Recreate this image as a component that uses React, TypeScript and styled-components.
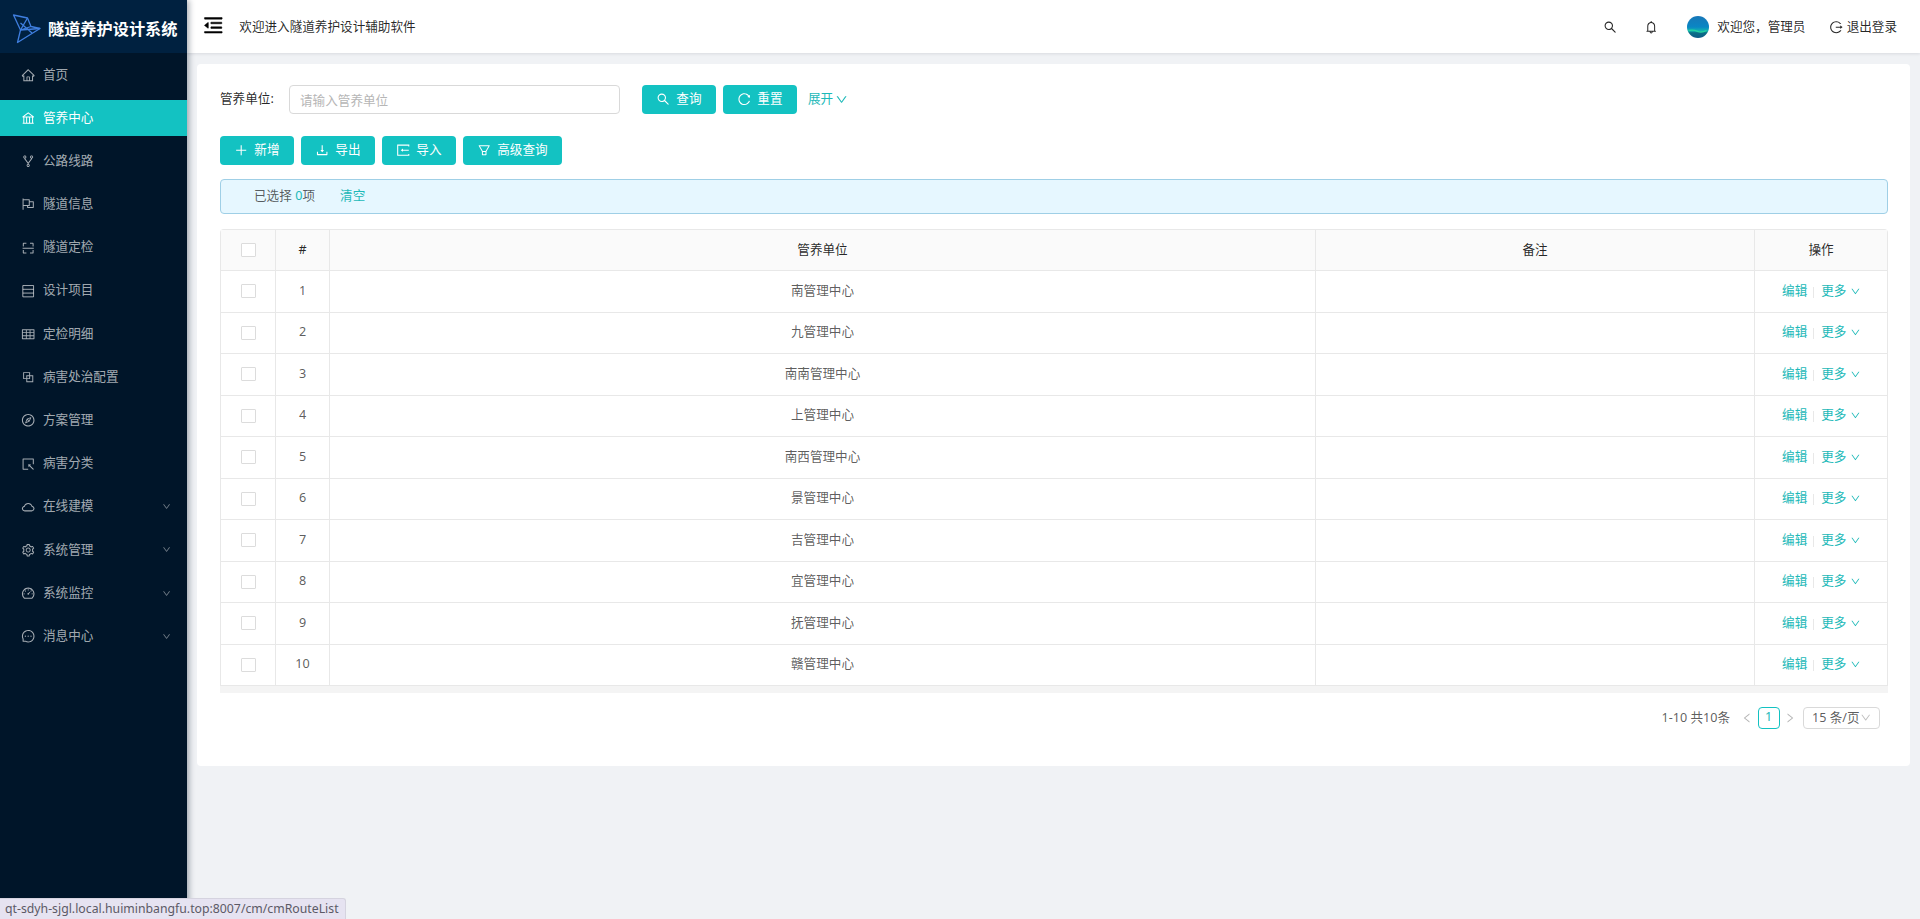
import React from "react";
import styled, { createGlobalStyle } from "styled-components";
import {
  AiOutlineHome, AiOutlineFork, AiOutlineFlag, AiOutlineScan,
  AiOutlineTable, AiOutlineBlock, AiOutlineCompass, AiOutlineSelect, AiOutlineCloud, AiOutlineSetting,
  AiOutlineDashboard, AiOutlineMessage, AiOutlineMenuFold, AiOutlineSearch, AiOutlineBell,
  AiOutlineLogout, AiOutlineReload, AiOutlinePlus, AiOutlineDownload,
  AiOutlineFilter, AiOutlineDown, AiOutlineLeft, AiOutlineRight,
} from "react-icons/ai";

const TEAL = "#13c2c2";
const LINK = "#1cb9b8";
const LINE = "#e8e8e8";

const GlobalStyle = createGlobalStyle`
  * { box-sizing: border-box; }
  body {
    margin: 0;
    background: #f0f2f5;
    font-family: "Noto Sans", "Noto Sans CJK SC", sans-serif;
    font-size: 12.6px;
    line-height: 18.9px;
    color: rgba(0, 0, 0, 0.65);
  }
  svg { display: block; flex: none; }
`;

const Page = styled.div`
  display: flex;
  height: 919px;
  overflow: hidden;
  background: #f0f2f5;
`;

/* The icon set leaves a 64/1024 margin round each drawing; the negative margin trims it. */
const GlyphBox = styled.span<{ $size: number; $bold?: boolean }>`
  flex: none;
  width: ${(p) => p.$size}px;
  height: ${(p) => p.$size}px;
  svg {
    width: ${(p) => p.$size * 1.143}px;
    height: ${(p) => p.$size * 1.143}px;
    margin: ${(p) => p.$size * -0.0715}px;
    stroke-width: ${(p) => (p.$bold ? 22 : 0)};
  }
`;

type IconComponent = React.ComponentType<any>;

const Glyph = ({ of: Icon, size = 12.6, bold }: { of: IconComponent; size?: number; bold?: boolean }) => (
  <GlyphBox $size={size} $bold={bold}><Icon /></GlyphBox>
);

const BankIcon = () => (
  <svg viewBox="0 0 1024 1024" fill="none" stroke="currentColor">
    <path strokeWidth="72" d="M110 440 512 130l402 310M110 425h804M120 880h784M200 440v420M400 440v420M610 440v420M824 440v420" />
  </svg>
);

const ProjectIcon = () => (
  <svg viewBox="0 0 1024 1024" fill="none" stroke="currentColor">
    <path strokeWidth="70" d="M130 110h764v804H130zM130 378h764M130 646h764" />
  </svg>
);

const ImportIcon = () => (
  <svg viewBox="0 0 1024 1024" fill="none" stroke="currentColor">
    <path strokeWidth="76" d="M910 250V150H120v724h790V774M420 512h490" />
    <path fill="currentColor" d="M340 512 500 400v224z" />
  </svg>
);

const Sidebar = styled.aside`
  flex: none;
  width: 187px;
  background: #001529;
  box-shadow: 2px 0 6px rgba(0, 21, 41, 0.35);
  z-index: 2;
`;

const Brand = styled.div`
  display: flex;
  align-items: center;
  height: 53px;
  padding: 5px 0 0 12px;
  background: #002140;
  color: #fff;
  font-size: 16.2px;
  font-weight: 700;
  white-space: nowrap;
`;

const BrandName = styled.span`
  margin-left: 7px;
`;

const Menu = styled.nav`
  display: flex;
  flex-direction: column;
  gap: 7.2px;
  padding-top: 4px;
`;

const MenuItem = styled.a<{ $active?: boolean }>`
  display: flex;
  align-items: center;
  height: 36px;
  padding: 0 16px 0 22px;
  color: ${(p) => (p.$active ? "#fff" : "rgba(255, 255, 255, 0.65)")};
  background: ${(p) => (p.$active ? TEAL : "transparent")};
`;

const MenuLabel = styled.span`
  flex: 1;
  margin-left: 8.4px;
`;

const Caret = styled.span`
  opacity: 0.7;
`;

const Main = styled.div`
  flex: 1;
  min-width: 0;
`;

const Header = styled.header`
  display: flex;
  align-items: center;
  height: 53px;
  padding: 1px 23px 0 16px;
  background: #fff;
  color: rgba(0, 0, 0, 0.85);
  box-shadow: 0 1px 3px rgba(0, 21, 41, 0.1);
`;

const MenuToggle = styled.span`
  display: flex;
  margin-bottom: 4px;
  color: #000;
  svg { stroke: currentColor; }
`;

const Welcome = styled.span`
  flex: 1;
  margin-left: 16.5px;
  padding-top: 1px;
`;

const HeaderAction = styled.span<{ $gap: number }>`
  display: flex;
  align-items: center;
  margin-left: ${(p) => p.$gap}px;
`;

const HeaderText = styled.span<{ $gap: number }>`
  margin-left: ${(p) => p.$gap}px;
`;

const Card = styled.section`
  height: 702px;
  margin: 11px 10px 0;
  padding: 21px 22px 0 23px;
  background: #fff;
  border-radius: 4px;
`;

const SearchRow = styled.div`
  display: flex;
  align-items: center;
  height: 29px;
`;

const FieldLabel = styled.label`
  width: 69px;
  color: rgba(0, 0, 0, 0.85);
`;

const Field = styled.input`
  width: 331px;
  height: 29px;
  margin-right: 22px;
  padding: 1px 10px 0;
  border: 1px solid #d9d9d9;
  border-radius: 4px;
  font: inherit;
  outline: none;
  &::placeholder { color: #b6b6b6; opacity: 1; }
`;

const Button = styled.button<{ $wide?: boolean }>`
  display: flex;
  align-items: center;
  justify-content: center;
  gap: 7.2px;
  width: ${(p) => (p.$wide ? 99 : 74)}px;
  height: 29px;
  margin-right: 7px;
  padding: 0;
  border: 0;
  border-radius: 4px;
  background: ${TEAL};
  color: #fff;
  font: inherit;
`;

const Expand = styled.a`
  display: flex;
  align-items: center;
  gap: 3px;
  margin-left: 4px;
  color: ${LINK};
`;

const Toolbar = styled.div`
  display: flex;
  margin-top: 22px;
`;

const Notice = styled.div`
  display: flex;
  align-items: center;
  height: 35px;
  margin-top: 14px;
  padding: 0 0 0 33px;
  border: 1px solid #9fcfe6;
  border-radius: 4px;
  background: #e6f7ff;
`;

const Accent = styled.span<{ $indent?: boolean }>`
  color: ${LINK};
  margin-left: ${(p) => (p.$indent ? 25 : 3.5)}px;
`;

const Table = styled.div`
  margin-top: 15px;
  border: 1px solid ${LINE};
  border-bottom: 0;
  border-radius: 4px 4px 0 0;
`;

const Row = styled.div<{ $head?: boolean }>`
  display: grid;
  grid-template-columns: 55px 54px 986px 439px 1fr;
  height: ${(p) => (p.$head ? 41 : 41.5)}px;
  background: ${(p) => (p.$head ? "#fafafa" : "#fff")};
  color: ${(p) => (p.$head ? "rgba(0, 0, 0, 0.85)" : "inherit")};
`;

const Cell = styled.div`
  display: flex;
  align-items: center;
  justify-content: center;
  border-right: 1px solid ${LINE};
  border-bottom: 1px solid ${LINE};
  &:last-child { border-right: 0; }
`;

const Checkbox = styled.span`
  width: 15px;
  height: 14px;
  border: 1px solid #dcdcdc;
  border-radius: 1px;
  background: #fff;
`;

const RowLink = styled.a`
  display: flex;
  align-items: center;
  gap: 4px;
  color: ${LINK};
`;

const Divider = styled.span`
  width: 1px;
  height: 11px;
  margin: 2px 7px 0 6px;
  background: ${LINE};
`;

const TableFoot = styled.div`
  height: 7px;
  background: #f4f4f4;
`;

const Pager = styled.div`
  display: flex;
  align-items: center;
  justify-content: flex-end;
  margin: 14px 8px 0 0;
`;

const PagerArrow = styled.span<{ $side: "left" | "right" }>`
  color: #b5b5b5;
  margin: ${(p) => (p.$side === "left" ? "0 5px 0 12px" : "0 8px 0 5px")};
`;

const PageNumber = styled.span`
  width: 22px;
  height: 22px;
  border: 1px solid ${TEAL};
  border-radius: 4px;
  color: ${LINK};
  line-height: 18px;
  text-align: center;
`;

const PageSize = styled.span`
  display: flex;
  align-items: center;
  justify-content: space-between;
  width: 77px;
  height: 22px;
  padding: 0 8px;
  border: 1px solid #d9d9d9;
  border-radius: 4px;
  white-space: nowrap;
  svg { color: #bfbfbf; }
`;

const StatusBar = styled.div`
  position: fixed;
  left: 0;
  bottom: 0;
  z-index: 3;
  width: 346px;
  height: 21px;
  padding-left: 5px;
  border-top: 1px solid #d5d3df;
  border-right: 1px solid #d5d3df;
  border-radius: 0 3px 0 0;
  background: #e6e3f1;
  color: #5c5a66;
  font-family: "Noto Sans", sans-serif;
  font-size: 12.28px;
  line-height: 20px;
  white-space: nowrap;
`;

const menu: { label: string; icon: IconComponent; active?: boolean; sub?: boolean }[] = [
  { label: "首页", icon: AiOutlineHome },
  { label: "管养中心", icon: BankIcon, active: true },
  { label: "公路线路", icon: AiOutlineFork },
  { label: "隧道信息", icon: AiOutlineFlag },
  { label: "隧道定检", icon: AiOutlineScan },
  { label: "设计项目", icon: ProjectIcon },
  { label: "定检明细", icon: AiOutlineTable },
  { label: "病害处治配置", icon: AiOutlineBlock },
  { label: "方案管理", icon: AiOutlineCompass },
  { label: "病害分类", icon: AiOutlineSelect },
  { label: "在线建模", icon: AiOutlineCloud, sub: true },
  { label: "系统管理", icon: AiOutlineSetting, sub: true },
  { label: "系统监控", icon: AiOutlineDashboard, sub: true },
  { label: "消息中心", icon: AiOutlineMessage, sub: true },
];

const units = [
  "南管理中心", "九管理中心", "南南管理中心", "上管理中心", "南西管理中心",
  "景管理中心", "吉管理中心", "宜管理中心", "抚管理中心", "赣管理中心",
];

const tools: { label: string; icon: IconComponent; wide?: boolean }[] = [
  { label: "新增", icon: AiOutlinePlus },
  { label: "导出", icon: AiOutlineDownload },
  { label: "导入", icon: ImportIcon },
  { label: "高级查询", icon: AiOutlineFilter, wide: true },
];

const Logo = () => (
  <svg width="29" height="30" viewBox="0 0 29 30" fill="none" stroke="#3f7fe0" strokeWidth="1.3" strokeLinejoin="round">
    <path d="M1.500 1 15.500 4 19 12.500 28 14.500 5.500 28.500 8.500 16Z" />
    <path d="M15.500 4 8.500 16 19 12.500M8.500 16 28 14.500M8.500 9 20 19" />
  </svg>
);

const Avatar = () => (
  <svg width="22" height="22" viewBox="0 0 22 22">
    <defs>
      <linearGradient id="sea" x1="0" y1="0" x2="0" y2="1">
        <stop offset="0" stopColor="#1877b8" />
        <stop offset="0.5" stopColor="#0a86c4" />
        <stop offset="0.68" stopColor="#12b5b0" />
        <stop offset="0.76" stopColor="#0b6f86" />
        <stop offset="1" stopColor="#0c5a88" />
      </linearGradient>
    </defs>
    <circle cx="11" cy="11" r="11" fill="url(#sea)" />
    <path d="M1.500 14.500q5-1 9 .8t9-.8" stroke="#25d3a0" strokeWidth="1.400" fill="none" />
  </svg>
);

export default function App() {
  return (
    <Page>
      <GlobalStyle />
      <Sidebar>
        <Brand>
          <Logo />
          <BrandName>隧道养护设计系统</BrandName>
        </Brand>
        <Menu>
          {menu.map(({ label, icon, active, sub }) => (
            <MenuItem key={label} $active={active}>
              <Glyph of={icon} />
              <MenuLabel>{label}</MenuLabel>
              {sub && <Caret><Glyph of={AiOutlineDown} size={8} /></Caret>}
            </MenuItem>
          ))}
        </Menu>
      </Sidebar>
      <Main>
        <Header>
          <MenuToggle><Glyph of={AiOutlineMenuFold} size={19.8} bold /></MenuToggle>
          <Welcome>欢迎进入隧道养护设计辅助软件</Welcome>
          <HeaderAction $gap={0}><Glyph of={AiOutlineSearch} /></HeaderAction>
          <HeaderAction $gap={28.8}><Glyph of={AiOutlineBell} /></HeaderAction>
          <HeaderAction $gap={29.4}>
            <Avatar />
            <HeaderText $gap={8.4}>欢迎您，管理员</HeaderText>
          </HeaderAction>
          <HeaderAction $gap={24.600}>
            <Glyph of={AiOutlineLogout} />
            <HeaderText $gap={4}>退出登录</HeaderText>
          </HeaderAction>
        </Header>
        <Card>
          <SearchRow>
            <FieldLabel>管养单位:</FieldLabel>
            <Field placeholder="请输入管养单位" />
            <Button><Glyph of={AiOutlineSearch} />查询</Button>
            <Button><Glyph of={AiOutlineReload} />重置</Button>
            <Expand>展开<Glyph of={AiOutlineDown} size={11.5} /></Expand>
          </SearchRow>
          <Toolbar>
            {tools.map(({ label, icon, wide }) => (
              <Button key={label} $wide={wide}><Glyph of={icon} />{label}</Button>
            ))}
          </Toolbar>
          <Notice>
            已选择<Accent>0</Accent>项<Accent $indent>清空</Accent>
          </Notice>
          <Table>
            <Row $head>
              <Cell><Checkbox /></Cell>
              <Cell>#</Cell>
              <Cell>管养单位</Cell>
              <Cell>备注</Cell>
              <Cell>操作</Cell>
            </Row>
            {units.map((unit, i) => (
              <Row key={unit}>
                <Cell><Checkbox /></Cell>
                <Cell>{i + 1}</Cell>
                <Cell>{unit}</Cell>
                <Cell />
                <Cell>
                  <RowLink>编辑</RowLink>
                  <Divider />
                  <RowLink>更多<Glyph of={AiOutlineDown} size={9.5} /></RowLink>
                </Cell>
              </Row>
            ))}
          </Table>
          <TableFoot />
          <Pager>
            1-10 共10条
            <PagerArrow $side="left"><Glyph of={AiOutlineLeft} size={10.500} /></PagerArrow>
            <PageNumber>1</PageNumber>
            <PagerArrow $side="right"><Glyph of={AiOutlineRight} size={10.500} /></PagerArrow>
            <PageSize>15 条/页<Glyph of={AiOutlineDown} size={10} /></PageSize>
          </Pager>
        </Card>
      </Main>
      <StatusBar>qt-sdyh-sjgl.local.huiminbangfu.top:8007/cm/cmRouteList</StatusBar>
    </Page>
  );
}
